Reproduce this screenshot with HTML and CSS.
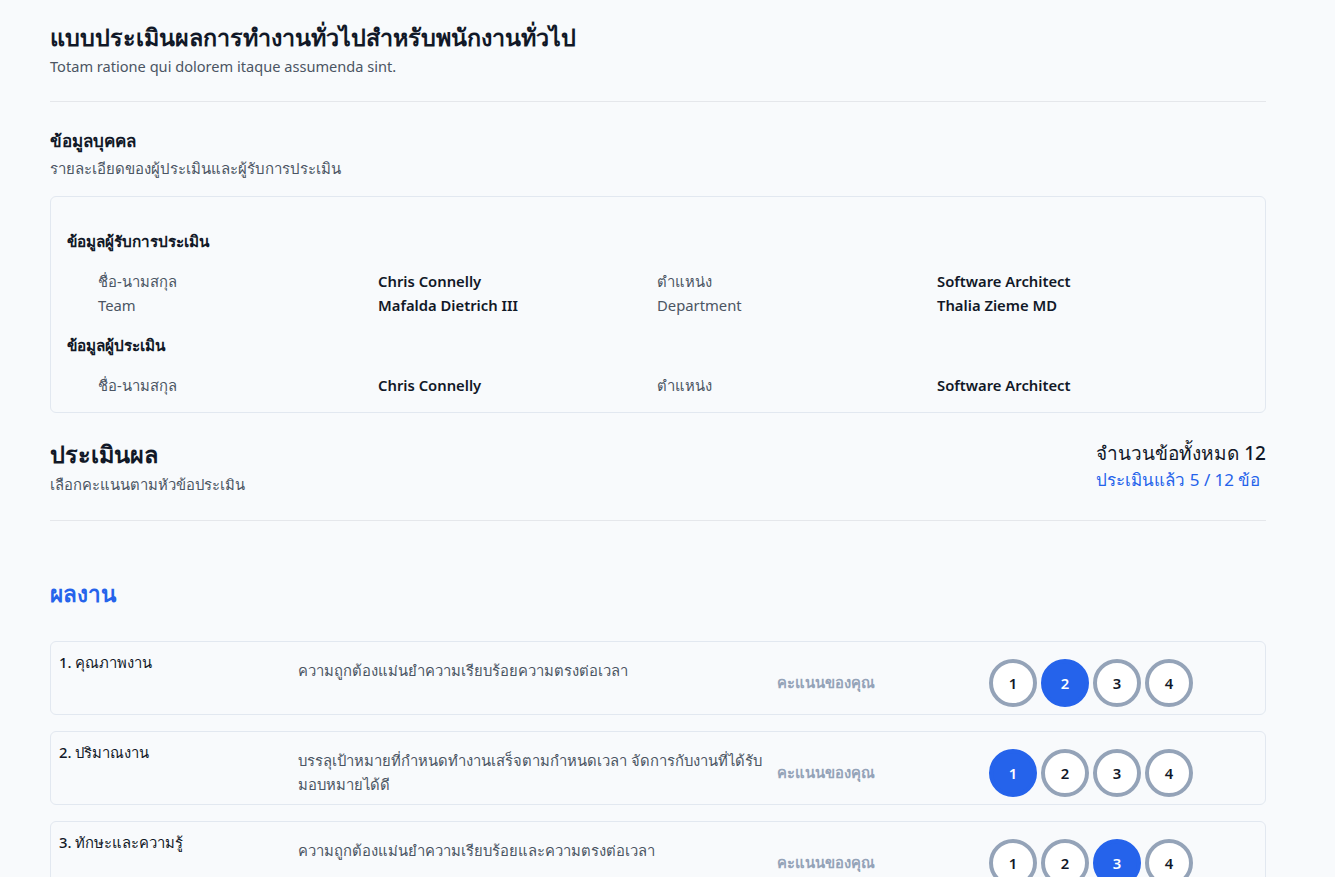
FILE: index.html
```html
<!DOCTYPE html>
<html lang="th">
<head>
<meta charset="utf-8">
<title>แบบประเมินผลการทำงาน</title>
<link rel="stylesheet" href="styles.css">
</head>
<body>
<main class="page">
  <header class="head">
    <h1 class="title">แบบประเมินผลการทำงานทั่วไปสำหรับพนักงานทั่วไป</h1>
    <p class="subtitle">Totam ratione qui dolorem itaque assumenda sint.</p>
  </header>
  <hr class="divider">

  <section class="personal">
    <h2 class="sec-title">ข้อมูลบุคคล</h2>
    <p class="sec-sub">รายละเอียดของผู้ประเมินและผู้รับการประเมิน</p>
    <div class="info-card">
      <h3 class="info-head">ข้อมูลผู้รับการประเมิน</h3>
      <div class="info-grid">
        <span class="lbl">ชื่อ-นามสกุล</span><span class="val">Chris Connelly</span>
        <span class="lbl">ตำแหน่ง</span><span class="val">Software Architect</span>
        <span class="lbl">Team</span><span class="val">Mafalda Dietrich III</span>
        <span class="lbl">Department</span><span class="val">Thalia Zieme MD</span>
      </div>
      <h3 class="info-head">ข้อมูลผู้ประเมิน</h3>
      <div class="info-grid">
        <span class="lbl">ชื่อ-นามสกุล</span><span class="val">Chris Connelly</span>
        <span class="lbl">ตำแหน่ง</span><span class="val">Software Architect</span>
      </div>
    </div>
  </section>

  <section class="eval-head">
    <div>
      <h2 class="eval-title">ประเมินผล</h2>
      <p class="eval-sub">เลือกคะแนนตามหัวข้อประเมิน</p>
    </div>
    <div class="count">
      <div class="count-total">จำนวนข้อทั้งหมด 12</div>
      <div class="count-done">ประเมินแล้ว 5 / 12 ข้อ</div>
    </div>
  </section>
  <hr class="divider divider-eval">

  <section class="group">
    <h2 class="group-title">ผลงาน</h2>
    <div class="items">
      <div class="item">
        <div class="item-name">1. คุณภาพงาน</div>
        <div class="item-desc">ความถูกต้องแม่นยำความเรียบร้อยความตรงต่อเวลา</div>
        <div class="score">
          <span class="score-lbl">คะแนนของคุณ</span>
          <div class="opts">
            <span class="opt">1</span><span class="opt on">2</span><span class="opt">3</span><span class="opt">4</span>
          </div>
        </div>
      </div>
      <div class="item">
        <div class="item-name">2. ปริมาณงาน</div>
        <div class="item-desc">บรรลุเป้าหมายที่กำหนดทำงานเสร็จตามกำหนดเวลา จัดการกับงานที่ได้รับมอบหมายได้ดี</div>
        <div class="score">
          <span class="score-lbl">คะแนนของคุณ</span>
          <div class="opts">
            <span class="opt on">1</span><span class="opt">2</span><span class="opt">3</span><span class="opt">4</span>
          </div>
        </div>
      </div>
      <div class="item">
        <div class="item-name">3. ทักษะและความรู้</div>
        <div class="item-desc">ความถูกต้องแม่นยำความเรียบร้อยและความตรงต่อเวลา</div>
        <div class="score">
          <span class="score-lbl">คะแนนของคุณ</span>
          <div class="opts">
            <span class="opt">1</span><span class="opt">2</span><span class="opt on">3</span><span class="opt">4</span>
          </div>
        </div>
      </div>
    </div>
  </section>
</main>
</body>
</html>
```
FILE: styles.css
```css
* { box-sizing: border-box; }
html, body { margin: 0; padding: 0; }
body {
  background: #f8fafc;
  color: #111827;
  font-family: "Noto Sans", "Open Sans", sans-serif;
  font-size: 14.8px;
}
.page {
  width: 1216px;
  margin-left: 50px;
  padding-top: 20px;
  padding-bottom: 40px;
}
h1, h2, h3, p { margin: 0; }
.title {
  font-size: 23.3px;
  font-weight: 600;
  line-height: 34px;
  color: #111827;
}
.subtitle {
  font-size: 14.6px;
  line-height: 24px;
  color: #4b5563;
}
.divider {
  border: 0;
  border-top: 1px solid #e5e7eb;
  margin: 23px 0 0;
}
.personal { padding-top: 26px; }
.sec-title {
  font-size: 17px;
  font-weight: 600;
  line-height: 26px;
}
.sec-sub {
  font-size: 15px;
  line-height: 24px;
  color: #4b5563;
  margin-top: 2px;
}
.info-card {
  margin-top: 16px;
  border: 1px solid #e2e8f0;
  border-radius: 6px;
  padding: 32px 16px 15px;
}
.info-head {
  font-size: 15.3px;
  font-weight: 600;
  line-height: 24px;
}
.info-head + .info-grid { margin-top: 16px; }
.info-grid + .info-head { margin-top: 16px; }
.info-grid {
  display: grid;
  grid-template-columns: 280px 279px 280px 280px;
  padding-left: 31px;
  line-height: 24px;
}
.lbl { color: #4b5563; }
.val { font-weight: 600; color: #111827; }

.eval-head {
  display: flex;
  justify-content: space-between;
  align-items: flex-start;
  margin-top: 26px;
}
.eval-title {
  font-size: 23.5px;
  font-weight: 600;
  line-height: 30px;
}
.eval-sub {
  font-size: 14.8px;
  line-height: 24px;
  color: #4b5563;
  margin-top: 3px;
}
.count-total {
  font-size: 19px;
  font-weight: 500;
  line-height: 28px;
}
.count-done {
  font-size: 17px;
  line-height: 26px;
  color: #2563eb;
}
.divider-eval { margin-top: 24px; }

.group { padding-top: 56px; }
.group-title {
  font-size: 22.5px;
  font-weight: 600;
  line-height: 34px;
  color: #2563eb;
}
.items {
  margin-top: 30px;
  display: flex;
  flex-direction: column;
  gap: 16px;
}
.item {
  display: grid;
  grid-template-columns: 239px 479px 1fr;
  align-items: start;
  border: 1px solid #e2e8f0;
  border-radius: 6px;
  padding: 8px 8px 7px;
}
.item-name {
  font-weight: 500;
  line-height: 24px;
}
.item-desc {
  margin-top: 8px;
  line-height: 24px;
  color: #4b5563;
}
.score {
  display: flex;
  align-items: center;
  margin-top: 9px;
}
.score-lbl {
  width: 212px;
  color: #94a3b8;
  font-weight: 600;
}
.opts { display: flex; gap: 4px; }
.opt {
  width: 48px;
  height: 48px;
  border-radius: 50%;
  border: 4px solid #94a3b8;
  background: #ffffff;
  display: flex;
  align-items: center;
  justify-content: center;
  font-weight: 600;
  color: #111827;
}
.opt.on {
  background: #2563eb;
  border-color: #2563eb;
  color: #ffffff;
}
```
